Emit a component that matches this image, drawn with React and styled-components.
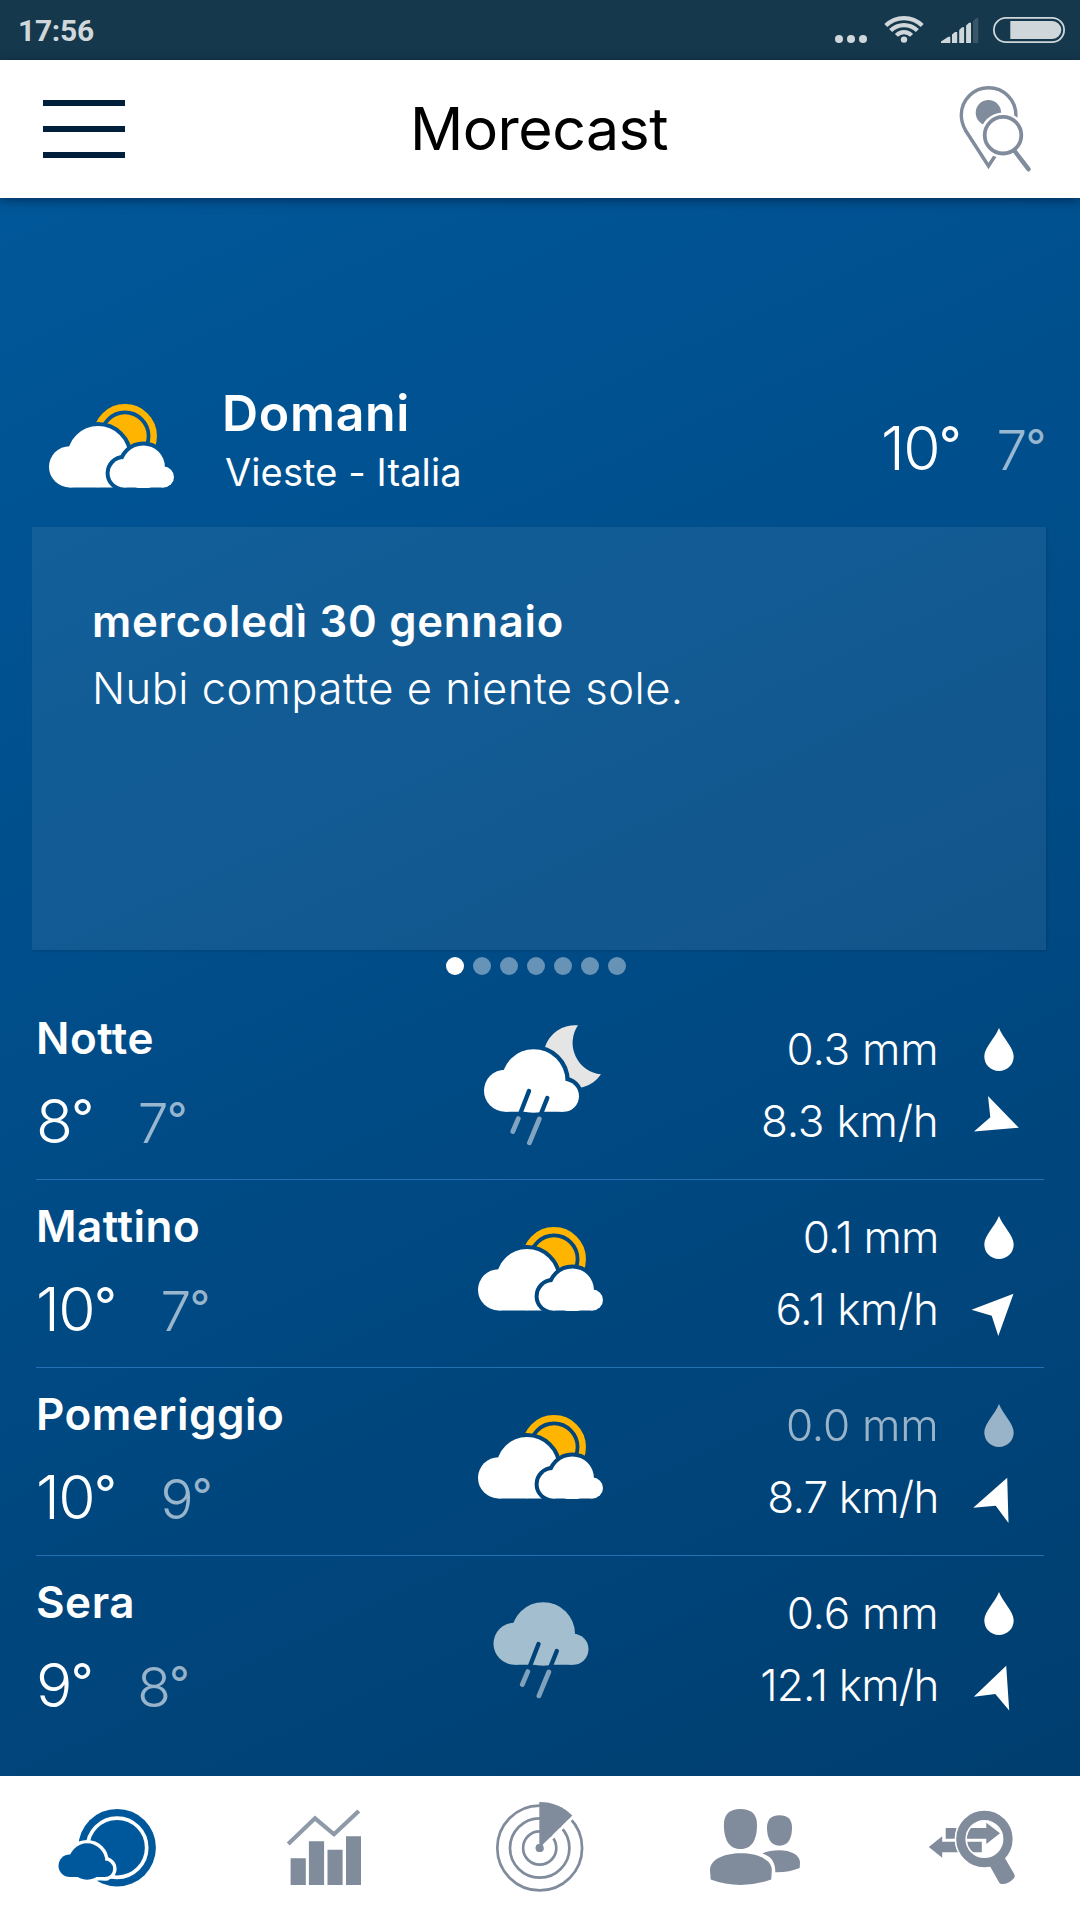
import React, { useId } from 'react';
import styled, { createGlobalStyle, css } from 'styled-components';

const GREY = '#808b9b';
const STATUS = '#d0d7db';

const GlobalStyle = createGlobalStyle`
  * { box-sizing: border-box; }
  body { margin: 0; font-family: Inter, 'Open Sans', sans-serif; }
  svg { display: block; flex: none; }
`;

const Screen = styled.div`
  display: flex;
  flex-direction: column;
  width: 1080px;
  height: 1920px;
  overflow: hidden;
`;

const StatusBar = styled.div`
  display: flex;
  align-items: flex-start;
  height: 60px;
  padding: 0 15px 0 18px;
  background: #15384c;
  color: ${STATUS};
`;

const Clock = styled.span`
  font: 700 30px/60px Roboto, sans-serif;
  letter-spacing: -0.3px;
  margin-right: auto;
  padding-top: 1px;
`;

const MoreDots = styled.div`
  display: flex;
  gap: 4px;
  margin: 35px 17px 0 0;
`;

const MoreDot = styled.i`
  width: 8px;
  height: 8px;
  border-radius: 50%;
  background: currentColor;
`;

const StatusIcon = styled.div`
  margin: ${(p) => p.$top}px ${(p) => p.$right}px 0 0;
`;

const Header = styled.header`
  display: grid;
  grid-template-columns: 1fr auto 1fr;
  align-items: center;
  height: 138px;
  padding: 0 49px 0 43px;
  background: #fff;
  box-shadow: 0 2px 10px rgba(0, 20, 50, 0.6);
  z-index: 1;
`;

const MenuButton = styled.div`
  display: flex;
  flex-direction: column;
  gap: 20px;
  width: 82px;
`;

const MenuBar = styled.i`
  height: 6px;
  background: #001f3d;
`;

const Brand = styled.h1`
  margin: 0 0 0 4px;
  font-size: 59px;
  line-height: 72px;
  font-weight: 380;
  letter-spacing: -0.5px;
  color: #000;
`;

const SearchButton = styled.div`
  justify-self: end;
`;

const Forecast = styled.main`
  flex: 1;
  color: #fff;
  background: linear-gradient(155deg, #005799 0%, #004b86 50%, #003e6f 100%);
`;

const Hero = styled.section`
  display: flex;
  align-items: flex-start;
  height: 329px;
  padding: 185px 34px 0 48px;
`;

const HeroIcon = styled.div`
  margin-top: 21px;
`;

const Place = styled.div`
  margin-left: 48px;
`;

const Day = styled.h2`
  margin: 0;
  font-size: 50px;
  line-height: 60px;
  font-weight: 600;
  letter-spacing: 0.7px;
`;

const City = styled.p`
  margin: 5px 0 0 3px;
  font-size: 38px;
  line-height: 48px;
  font-weight: 400;
  letter-spacing: 0.1px;
`;

const Temps = styled.div`
  display: flex;
  align-items: baseline;
  height: 72px;
  line-height: 72px;
  ${(p) => (p.$hero
    ? css`gap: 35px; margin: 29px 0 0 auto;`
    : css`gap: 44px; margin-top: 21px;`)}
`;

const High = styled.span`
  font-size: 60.5px;
  font-weight: 300;
  letter-spacing: -1.5px;
`;

const Low = styled.span`
  font-size: 55px;
  font-weight: 290;
  letter-spacing: -1.5px;
  color: rgba(255, 255, 255, 0.6);
`;

const Degree = styled.span`
  font-size: 0.81em;
  line-height: 0;
  font-weight: 380;
  letter-spacing: 0;
  vertical-align: 0.17em;
`;

const Card = styled.section`
  height: 423px;
  margin: 0 34px 0 32px;
  padding: 67px 60px;
  background: rgba(255, 255, 255, 0.07);
  box-shadow: 1px 1px 2px rgba(0, 30, 60, 0.25);
`;

const CardDate = styled.h3`
  margin: 0;
  font-size: 43.6px;
  line-height: 56px;
  font-weight: 600;
  letter-spacing: 0.75px;
`;

const CardText = styled.p`
  margin: 11px 0 0;
  font-size: 43.6px;
  line-height: 56px;
  font-weight: 270;
  letter-spacing: 0.45px;
`;

const Pager = styled.div`
  display: flex;
  gap: 9px;
  margin: 7px 0 17px 445.5px;
`;

const PagerDot = styled.i`
  width: 18px;
  height: 18px;
  border-radius: 50%;
  background: ${(p) => (p.$active ? '#fff' : 'rgba(255, 255, 255, 0.4)')};
`;

const Periods = styled.section`
  padding: 0 36px;
`;

const PeriodRow = styled.article`
  display: grid;
  grid-template-columns: 1fr 126px 1fr;
  height: 188px;
  border-bottom: 1px solid #2171b4;
  &:last-child { border-bottom: 0; }
`;

const PeriodInfo = styled.div`
  padding-top: 20px;
`;

const PeriodName = styled.h4`
  margin: 0;
  font-size: 44px;
  line-height: 52px;
  font-weight: 600;
  letter-spacing: 0.5px;
`;

const PeriodIcon = styled.div`
  padding-top: ${(p) => p.$top}px;
`;

const Measures = styled.div`
  padding: 21px 13px 0 0;
`;

const Measure = styled.div`
  display: flex;
  justify-content: flex-end;
  gap: 28.5px;
  height: 72px;
  font-size: 44px;
  line-height: 72px;
  font-weight: 270;
  letter-spacing: ${(p) => p.$tracking ?? -0.2}px;
  white-space: nowrap;
  opacity: ${(p) => (p.$dim ? 0.6 : 1)};
`;

const BottomNav = styled.nav`
  display: grid;
  grid-template-columns: repeat(5, 1fr);
  align-items: center;
  justify-items: center;
  height: 144px;
  background: #fff;
`;

/* ---------- icons ---------- */

const WifiIcon = () => (
  <svg width="40" height="28" viewBox="0 0 40 28" fill="none" stroke={STATUS} strokeWidth="4.2">
    <path d="M1.8 10.6 A25.8 25.8 0 0 1 38.2 10.6" />
    <path d="M6.6 15.6 A19 19 0 0 1 33.4 15.6" />
    <path d="M12.4 20.4 A10.6 10.6 0 0 1 27.6 20.4" />
    <circle cx="20" cy="24.6" r="3.2" fill={STATUS} stroke="none" />
  </svg>
);

const SignalIcon = () => (
  <svg width="38" height="25" viewBox="0 0 38 25" fill={STATUS}>
    <path d="M0 25 V23.4 L7.4 18.8 H9.3 V25Z" />
    <path d="M11 25 V16.4 L14 14 H16.2 V25Z" />
    <path d="M18.2 25 V12 L21 9.2 H23.1 V25Z" />
    <path d="M25.1 25 V7.4 L28 4.8 H30 V25Z" />
    <path d="M32.1 25 V3 L35.4 0 H37.3 V25Z" opacity=".2" />
  </svg>
);

const BatteryIcon = () => (
  <svg width="72" height="26" viewBox="0 0 72 26">
    <rect x=".9" y=".9" width="70.2" height="24.2" rx="12.1" fill="none" stroke={STATUS} strokeWidth="1.8" />
    <path d="M17.3 4 H59.3 A9 9 0 0 1 59.3 22 H17.3Z" fill={STATUS} />
  </svg>
);

const PlaceSearchIcon = () => (
  <svg width="72" height="88" viewBox="0 0 72 88" fill="none" stroke={GREY}>
    <path strokeWidth="3.4" d="M29.5 81 L6.6 45.5 C3.8 40.5 2.3 35.5 2.3 30 A27.3 27.3 0 0 1 56.9 30 C56.9 35.5 55.3 40.5 52.4 45.5 Z" />
    <circle cx="29.4" cy="27.7" r="12.7" fill={GREY} stroke="none" />
    <circle cx="44" cy="50.2" r="22.8" fill="#fff" stroke="none" />
    <circle cx="44" cy="50.2" r="18.3" strokeWidth="3.8" />
    <path strokeWidth="4.4" strokeLinecap="round" d="M56 66.5 L69.5 84.2" />
  </svg>
);

const BigCloud = () => (
  <>
    <circle cx="20.6" cy="62.8" r="20.6" />
    <circle cx="49" cy="52.6" r="30.6" />
    <path d="M20.6 52 H75 V83.4 H20.6Z" />
  </>
);

const SmallCloud = () => (
  <>
    <circle cx="74.8" cy="69.2" r="14.2" />
    <circle cx="94.3" cy="63" r="21.6" />
    <circle cx="114.6" cy="73" r="10.4" />
    <path d="M74.8 66 H114.6 V83.4 H74.8Z" />
  </>
);

const SunCloudIcon = () => {
  const id = useId();
  return (
    <svg width="126" height="84" viewBox="-1 0 126 84">
      <mask id={`${id}s`} maskUnits="userSpaceOnUse" x="-1" y="-1" width="127" height="86">
        <rect x="-1" y="-1" width="127" height="86" fill="#fff" />
        <g fill="#000" stroke="#000" strokeWidth="8"><BigCloud /><SmallCloud /></g>
      </mask>
      <mask id={`${id}c`} maskUnits="userSpaceOnUse" x="-1" y="-1" width="127" height="86">
        <rect x="-1" y="-1" width="127" height="86" fill="#fff" />
        <g fill="#000" stroke="#000" strokeWidth="8"><SmallCloud /></g>
      </mask>
      <g mask={`url(#${id}s)`}>
        <circle cx="76" cy="32" r="28.7" fill="none" stroke="#ffb400" strokeWidth="6.5" />
        <circle cx="76" cy="32" r="21.7" fill="#ffb400" />
      </g>
      <g fill="#fff" mask={`url(#${id}c)`}><BigCloud /></g>
      <g fill="#fff"><SmallCloud /></g>
    </svg>
  );
};

const RainCloud = () => (
  <>
    <circle cx="21" cy="65.7" r="21" />
    <circle cx="49.7" cy="56" r="31.8" />
    <circle cx="79.5" cy="71.2" r="15.5" />
    <path d="M21 60 H79.5 V86.7 H21Z" />
  </>
);

const RainIcon = ({ moon, color = '#fff' }) => {
  const id = useId();
  return (
    <svg width="126" height={moon ? 122 : 98} viewBox={moon ? '-7 0 126 122' : '-16.5 24 126 98'}>
      <mask id={`${id}m`} maskUnits="userSpaceOnUse" x="-7" y="-1" width="130" height="124">
        <rect x="-7" y="-1" width="130" height="124" fill="#fff" />
        <g fill="#000" stroke="#000" strokeWidth="8.6"><RainCloud /></g>
      </mask>
      <mask id={`${id}r`} maskUnits="userSpaceOnUse" x="-7" y="-1" width="130" height="124">
        <rect x="-7" y="-1" width="130" height="124" fill="#fff" />
        <path d="M45 66 L35.6 90.3 M63.3 73 L56.4 90.3" stroke="#000" strokeWidth="4.4" strokeLinecap="round" />
      </mask>
      {moon && (
        <path
          mask={`url(#${id}m)`}
          fill="#e5e5e5"
          d="M94 .3 A31.5 31.5 0 0 0 117 49.3 A31.5 31.5 0 1 1 94 .3Z"
        />
      )}
      <g fill={color} mask={`url(#${id}r)`}><RainCloud /></g>
      <path
        d="M34.3 93.6 L28.8 106.5 M55.3 94 L45.4 117.8"
        stroke="rgba(255,255,255,.5)"
        strokeWidth="4.8"
        strokeLinecap="round"
      />
    </svg>
  );
};

const DropIcon = () => (
  <svg width="64" height="72" viewBox="0 0 64 72" fill="#fff">
    <path d="M32 15 C35.5 24.5 46.7 34.5 46.7 43.3 C46.7 51.8 40.2 58 32 58 C23.8 58 17.3 51.8 17.3 43.3 C17.3 34.5 28.5 24.5 32 15Z" />
  </svg>
);

const WindIcon = ({ points }) => (
  <svg width="64" height="72" viewBox="0 0 64 72" fill="#fff">
    <polygon points={points} />
  </svg>
);

const NavIcon = ({ view, children }) => (
  <svg width="100" height="100" viewBox={`${view} 100 100`} fill={GREY}>{children}</svg>
);

const NavCloud = () => (
  <>
    <circle cx="12.1" cy="57.8" r="11.3" />
    <circle cx="29.4" cy="53.5" r="18.2" />
    <circle cx="47.2" cy="60.8" r="8.3" />
    <path d="M12.1 55 H47.2 V69.1 H12.1Z" />
  </>
);

const TodayIcon = () => (
  <NavIcon view="0.3 -10">
    <circle cx="59.4" cy="39.7" r="38.8" fill="#00589c" />
    <circle cx="59.4" cy="39.7" r="29.6" fill="none" stroke="#fff" strokeWidth="3.7" />
    <g fill="#fff" stroke="#fff" strokeWidth="6.8"><NavCloud /></g>
    <g fill="#00589c"><NavCloud /></g>
  </NavIcon>
);

const ChartIcon = () => (
  <NavIcon view="-12 -11">
    <path d="M4.6 49.3h15.2V76H4.6zM22.9 32.3h15.2V76H22.9zM41.5 40.7h15.1V76H41.5zM60 27.3h15V76H60z" />
    <path d="M2.2 35 L29 9.3 L48 25.3 L72.8 2" fill="none" stroke="#8e9aa8" strokeWidth="4.2" />
  </NavIcon>
);

const RadarIcon = () => (
  <NavIcon view="489.7 22">
    <g fill="none" stroke={GREY} strokeWidth="2.7">
      <circle cx="539.4" cy="72" r="42.4" />
      <circle cx="539.4" cy="72" r="29.7" />
      <circle cx="539.4" cy="72" r="16.6" />
    </g>
    <circle cx="539.4" cy="72" r="4" />
    <path d="M541.5 72 L573.5 40" stroke="#fff" strokeWidth="3" />
    <path d="M539 72 V26 A46 46 0 0 1 572 39.6Z" />
    <circle cx="539.4" cy="72" r="4" />
  </NavIcon>
);

const PeopleIcon = () => (
  <NavIcon view="-4 -11">
    <path d="M30.4 0 C41 0 47 5 47 15.5 C47 30 42.5 40 30.4 40 C18.5 40 13.9 30 13.9 15.5 C13.9 5 20 0 30.4 0Z" />
    <path d="M0 61 C0 50.5 14 44.3 30.7 44.3 C47.5 44.3 61.8 50.5 61.8 61 L61.2 70.6 Q46 76 30.7 76 Q15 76 .7 70.6Z" />
    <path d="M69.5 6.3 C77.5 6.3 82 10.5 82 18.5 C82 29 78.5 36.7 69.5 36.7 C60.5 36.7 57 29 57 18.5 C57 10.5 61.5 6.3 69.5 6.3Z" />
    <path d="M52.3 44.5 C57 42.2 63 41.3 69 41.3 C81 41.3 90 46 90 53.5 L89.7 59 Q79 63.5 65.3 63.2 C65.6 54 61.5 47 52.3 44.5Z" />
  </NavIcon>
);

const CompareIcon = () => (
  <NavIcon view="-6 -12">
    <path d="M17.7 18H58.3V12.7L72 23.3L58.3 34V28.7H17.7Z" />
    <path d="M.8 37L14.2 26.3V31.7H53.8V42.3H14.2V47.7Z" />
    <circle cx="56.4" cy="29" r="23.6" fill="none" stroke="#fff" strokeWidth="12.4" />
    <circle cx="56.4" cy="29" r="23.6" fill="none" stroke={GREY} strokeWidth="9.2" />
    <path d="M65.5 56 L74.5 50.5 L83.5 66 Q79.5 70.5 74 70.8Z" stroke={GREY} strokeWidth="6.5" strokeLinejoin="round" />
  </NavIcon>
);

/* ---------- content ---------- */

const periods = [
  {
    name: 'Notte', high: 8, low: 7, rain: '0.3 mm', wind: '8.3 km/h', top: 33,
    icon: <RainIcon moon />, arrow: '51.8,42.8 21,11 23.3,32.3 7,46.6',
  },
  {
    name: 'Mattino', high: 10, low: 7, rain: '0.1 mm', wind: '6.1 km/h', top: 47,
    icon: <SunCloudIcon />, arrow: '46.5,20.8 31.3,63 24.7,42.7 4.5,36.7',
    rainTracking: -0.9, windTracking: -0.4,
  },
  {
    name: 'Pomeriggio', high: 10, low: 9, rain: '0.0 mm', wind: '8.7 km/h', top: 47,
    icon: <SunCloudIcon />, arrow: '40.2,16.8 41.5,62 28.7,44.7 6.2,46.8', dry: true,
    windTracking: -0.8,
  },
  {
    name: 'Sera', high: 9, low: 8, rain: '0.6 mm', wind: '12.1 km/h', top: 46,
    icon: <RainIcon color="#a3bfcf" />, arrow: '39.2,16.8 42.2,61.4 28.3,45 6.8,47.8',
    windTracking: -0.8,
  },
];

const TempPair = ({ high, low, hero }) => (
  <Temps $hero={hero}>
    <High>{high}<Degree>°</Degree></High>
    <Low>{low}<Degree>°</Degree></Low>
  </Temps>
);

export default function App() {
  return (
    <Screen>
      <GlobalStyle />
      <StatusBar>
        <Clock>17:56</Clock>
        <MoreDots><MoreDot /><MoreDot /><MoreDot /></MoreDots>
        <StatusIcon $top={15} $right={17}><WifiIcon /></StatusIcon>
        <StatusIcon $top={18} $right={14}><SignalIcon /></StatusIcon>
        <StatusIcon $top={17} $right={0}><BatteryIcon /></StatusIcon>
      </StatusBar>
      <Header>
        <MenuButton><MenuBar /><MenuBar /><MenuBar /></MenuButton>
        <Brand>Morecast</Brand>
        <SearchButton><PlaceSearchIcon /></SearchButton>
      </Header>
      <Forecast>
        <Hero>
          <HeroIcon><SunCloudIcon /></HeroIcon>
          <Place>
            <Day>Domani</Day>
            <City>Vieste - Italia</City>
          </Place>
          <TempPair high={10} low={7} hero />
        </Hero>
        <Card>
          <CardDate>mercoledì 30 gennaio</CardDate>
          <CardText>Nubi compatte e niente sole.</CardText>
        </Card>
        <Pager>
          {Array.from({ length: 7 }, (_, i) => <PagerDot key={i} $active={i === 0} />)}
        </Pager>
        <Periods>
          {periods.map((p) => (
            <PeriodRow key={p.name}>
              <PeriodInfo>
                <PeriodName>{p.name}</PeriodName>
                <TempPair high={p.high} low={p.low} />
              </PeriodInfo>
              <PeriodIcon $top={p.top}>{p.icon}</PeriodIcon>
              <Measures>
                <Measure $dim={p.dry} $tracking={p.rainTracking}>{p.rain}<DropIcon /></Measure>
                <Measure $tracking={p.windTracking}>{p.wind}<WindIcon points={p.arrow} /></Measure>
              </Measures>
            </PeriodRow>
          ))}
        </Periods>
      </Forecast>
      <BottomNav>
        <TodayIcon />
        <ChartIcon />
        <RadarIcon />
        <PeopleIcon />
        <CompareIcon />
      </BottomNav>
    </Screen>
  );
}
